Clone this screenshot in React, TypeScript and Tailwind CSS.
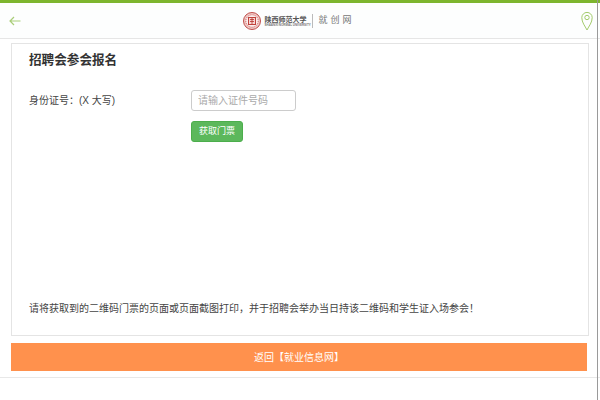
const cjk = "font-['Liberation_Sans','Noto_Sans_CJK_SC',sans-serif]";

function Seal() {
  return (
    <svg width="18" height="18" viewBox="0 0 18 18" className="shrink-0">
      <circle cx="9" cy="9" r="8.5" fill="#f0c9c6" stroke="#c0504d" strokeWidth="1" />
      <circle cx="9" cy="9" r="6.2" fill="#fbeeee" stroke="#c9605c" strokeWidth="1" strokeDasharray="1 1" />
      <rect x="5.5" y="5.5" width="7" height="7" fill="#f6d7d4" stroke="#c0413b" strokeWidth="1" />
      <path d="M7 7.5h4M7 9.5h4M9 6v6" stroke="#b8322c" strokeWidth="0.8" fill="none" />
    </svg>
  );
}

export default function App() {
  return (
    <div className={`${cjk} h-[400px] w-[600px] overflow-hidden bg-white text-[#333] relative`}>
      <header className="flex h-[39px] items-center justify-between border-t-[3px] border-b border-t-[#7db52e] border-b-[#e6e6e6] bg-[#fdfefe] pl-[9px] pr-[7px]">
        <svg width="12" height="10" viewBox="0 0 12 10" fill="none" stroke="#a9cd78" strokeWidth="1.2">
          <path d="M11.5 5H1M5 1 1 5l4 4" />
        </svg>
        <div className="mr-[4px] flex items-center gap-[3px]">
          <Seal />
          <div className="flex w-[43px] flex-col items-start">
            <span className="font-['Noto_Sans_CJK_SC',serif] text-[7px] leading-[8px] font-bold whitespace-nowrap text-[#555]">
              陕西师范大学
            </span>
            <span className="text-[3px] leading-[4px] font-bold whitespace-nowrap text-[#777]">
              SHAANXI NORMAL UNIVERSITY
            </span>
          </div>
          <div className="ml-[2px] h-[14px] w-px bg-[#bbb]" />
          <span className="ml-[2px] text-[9px] tracking-[3px] text-[#777]">就创网</span>
        </div>
        <svg width="12" height="20" viewBox="0 0 12 20" fill="none" stroke="#a3cb6c" strokeWidth="1">
          <path d="M6 19C4 15 .8 11.5.8 6.6a5.2 5.2 0 0 1 10.4 0C11.2 11.5 8 15 6 19Z" />
          <circle cx="6" cy="6.5" r="2.2" />
        </svg>
      </header>

      <main className="mx-[11px] mt-[4px] flex h-[293px] w-[578px] flex-col border border-[#e4e4e4] pl-[17px]">
        <h1 className="mt-[6px] text-[12.6px] leading-[20px] font-bold text-[#333]">招聘会参会报名</h1>
        <div className="mt-[20px] flex">
          <label className="mt-[3px] w-[162px] text-[10px] leading-[16px] text-[#444]">身份证号：(X 大写)</label>
          <div className="flex flex-col items-start">
            <input
              placeholder="请输入证件号码"
              className="h-[21px] w-[105px] rounded-[3px] border border-[#ccc] bg-white px-[6px] text-[10px] outline-none placeholder:text-[#aaa]"
            />
            <button className="mt-[10px] h-[21px] w-[52px] rounded-[3px] border border-[#4cae4c] bg-[#5cb85c] text-[9px] text-white">
              获取门票
            </button>
          </div>
        </div>
        <p className="mt-auto mb-[18px] text-[10px] leading-[16px] whitespace-nowrap text-[#444]">
          请将获取到的二维码门票的页面或页面截图打印，并于招聘会举办当日持该二维码和学生证入场参会！
        </p>
      </main>

      <a className="mx-[11px] mt-[7px] flex h-[28px] w-[576px] items-center justify-center bg-[#ff914d] text-[10px] text-white">
        返回【就业信息网】
      </a>
      <div className="mt-[6px] h-px bg-[#e8e8e8]" />
      <div className="absolute top-0 right-[2px] h-full w-px bg-[#9a9a9a]" />
    </div>
  );
}
